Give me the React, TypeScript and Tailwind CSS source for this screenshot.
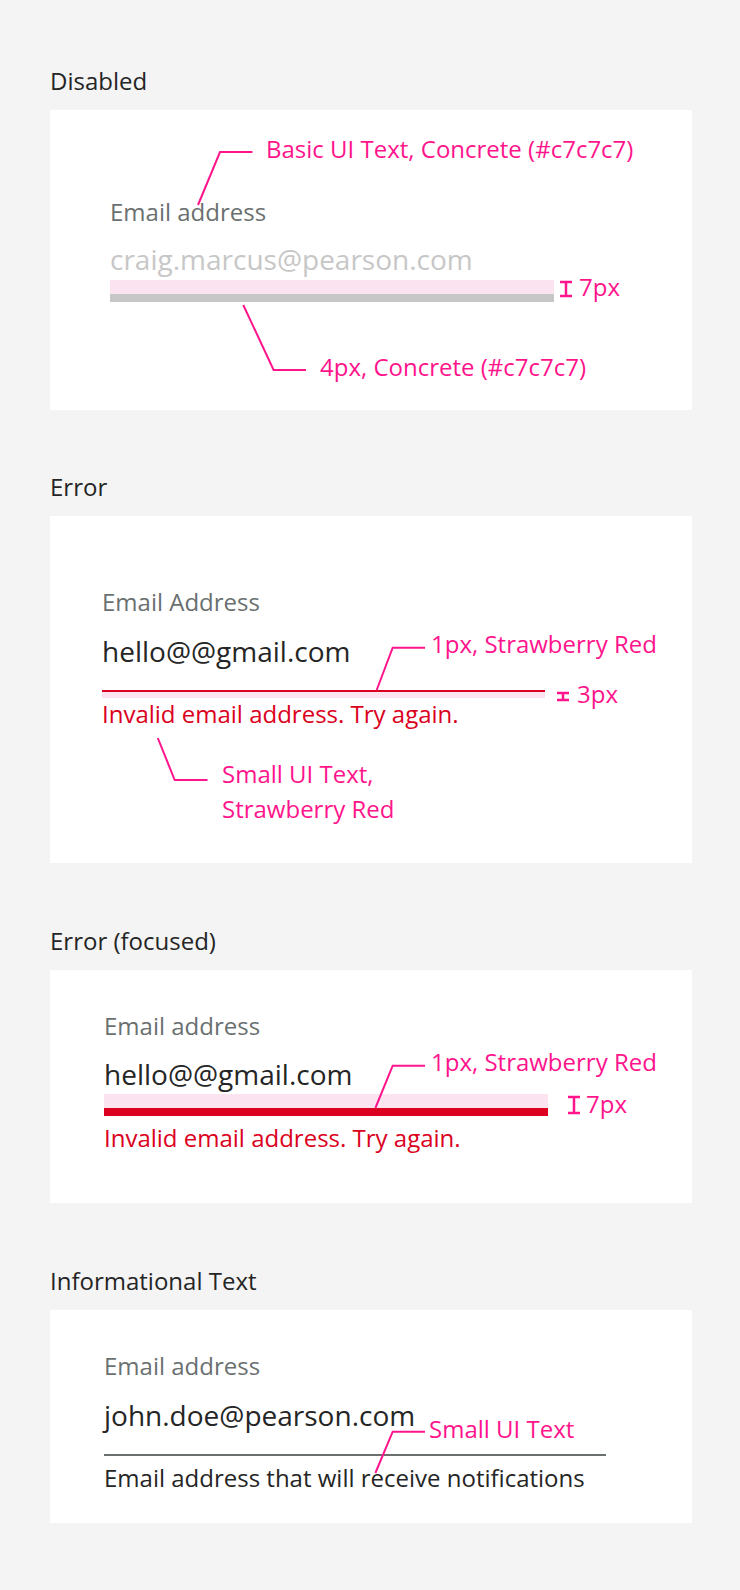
const PINK = '#ff148c';

const Section = ({ title, gap = 62, children }: { title: string; gap?: number; children: React.ReactNode }) => (
  <section style={{ marginBottom: gap }}>
    <h2 className="text-[24px] leading-[32px] text-[#252525] mb-[13px]">{title}</h2>
    {children}
  </section>
);

const Note = ({ left, top, children, lh = 32 }: { left: number; top: number; children: React.ReactNode; lh?: number }) => (
  <div
    className="absolute text-[24px] text-[#ff148c] whitespace-nowrap"
    style={{ left, top, lineHeight: `${lh}px` }}
  >
    {children}
  </div>
);

const Leader = ({ points }: { points: string }) => (
  <polyline points={points} fill="none" stroke={PINK} strokeWidth="2" />
);

const IBeam = ({ x, y1, y2, w = 12 }: { x: number; y1: number; y2: number; w?: number }) => (
  <g stroke={PINK} strokeWidth="2.5" fill="none">
    <line x1={x - w / 2} y1={y1} x2={x + w / 2} y2={y1} />
    <line x1={x - w / 2} y1={y2} x2={x + w / 2} y2={y2} />
    <line x1={x} y1={y1} x2={x} y2={y2} />
  </g>
);

export default function App() {
  return (
    <div className="w-[740px] min-h-[1590px] bg-[#f4f4f4] pt-[65px] pl-[50px] font-['Open_Sans',sans-serif]">
      <Section title="Disabled" gap={61}>
        <div className="relative w-[642px] h-[300px] bg-white pt-[86px] pl-[60px]">
          <div className="text-[24px] leading-[32px] text-[#6a7070]">Email address</div>
          <div className="mt-[13px] text-[28px] leading-[36px] text-[#c7c7c7]">craig.marcus@pearson.com</div>
          <div className="mt-[3px] w-[444px]">
            <div className="h-[14px] bg-[#fbe3ef]" />
            <div className="h-[8px] bg-[#c7c7c7]" />
          </div>

          <svg className="absolute inset-0 pointer-events-none" width="642" height="300">
            <Leader points="202.5,42 170,42 148,95" />
            <Leader points="193.3,195 223.6,260 256,260" />
            <IBeam x={516} y1={172} y2={186} />
          </svg>
          <Note left={216} top={23}>Basic UI Text, Concrete (#c7c7c7)</Note>
          <Note left={529} top={161}>7px</Note>
          <Note left={270} top={241}>4px, Concrete (#c7c7c7)</Note>
        </div>
      </Section>

      <Section title="Error">
        <div className="relative w-[642px] h-[347px] bg-white pt-[70px] pl-[52px]">
          <div className="text-[24px] leading-[32px] text-[#6a7070]">Email Address</div>
          <div className="mt-[15px] text-[28px] leading-[36px] text-[#252525]">hello@@gmail.com</div>
          <div className="mt-[21px] w-[443px]">
            <div className="h-[2px] bg-[#db0020]" />
            <div className="h-[6px] bg-[#fbe3ef]" />
          </div>
          <div className="text-[24px] leading-[32px] text-[#db0020]">Invalid email address. Try again.</div>

          <svg className="absolute inset-0 pointer-events-none" width="642" height="347">
            <Leader points="375,131.7 342.7,131.7 326.7,174" />
            <Leader points="107.8,222 124.7,264 157.5,264" />
            <IBeam x={513} y1={177} y2={184} />
          </svg>
          <Note left={381} top={112}>1px, Strawberry Red</Note>
          <Note left={527} top={162}>3px</Note>
          <Note left={172} top={240} lh={35}>
            Small UI Text,
            <br />
            Strawberry Red
          </Note>
        </div>
      </Section>

      <Section title="Error (focused)">
        <div className="relative w-[642px] h-[233px] bg-white pt-[40px] pl-[54px]">
          <div className="text-[24px] leading-[32px] text-[#6a7070]">Email address</div>
          <div className="mt-[14px] text-[28px] leading-[36px] text-[#252525]">hello@@gmail.com</div>
          <div className="mt-[2px] w-[444px]">
            <div className="h-[14px] bg-[#fbe3ef]" />
            <div className="h-[8px] bg-[#db0020]" />
          </div>
          <div className="mt-[6px] text-[24px] leading-[32px] text-[#db0020]">Invalid email address. Try again.</div>

          <svg className="absolute inset-0 pointer-events-none" width="642" height="233">
            <Leader points="375,95.7 342.7,95.7 325.4,138" />
            <IBeam x={524} y1={127} y2={143} />
          </svg>
          <Note left={381} top={76}>1px, Strawberry Red</Note>
          <Note left={536} top={118}>7px</Note>
        </div>
      </Section>

      <Section title="Informational Text" gap={0}>
        <div className="relative w-[642px] h-[213px] bg-white pt-[40px] pl-[54px]">
          <div className="text-[24px] leading-[32px] text-[#6a7070]">Email address</div>
          <div className="mt-[15px] text-[28px] leading-[36px] text-[#252525]">john.doe@pearson.com</div>
          <div className="mt-[21px] w-[502px] h-[2px] bg-[#6a7070]" />
          <div className="mt-[6px] text-[24px] leading-[32px] text-[#252525]">
            Email address that will receive notifications
          </div>

          <svg className="absolute inset-0 pointer-events-none" width="642" height="213">
            <Leader points="375,121.7 342.7,121.7 325.4,163" />
          </svg>
          <Note left={379} top={103}>Small UI Text</Note>
        </div>
      </Section>
    </div>
  );
}
